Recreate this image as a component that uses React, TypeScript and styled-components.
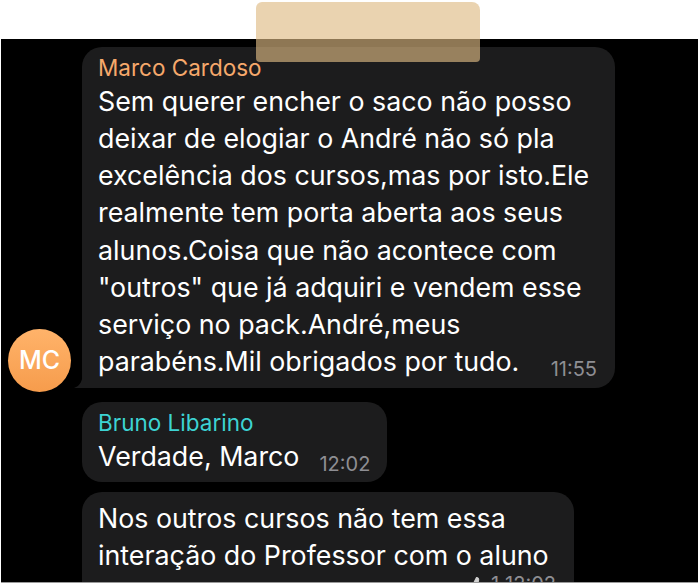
import React from "react";
import styled, { createGlobalStyle } from "styled-components";
import { ThumbsUp } from "lucide-react";

const Global = createGlobalStyle`
  html, body { margin: 0; padding: 0; background: #ffffff; }
  body { width: 700px; height: 585px; overflow: hidden; font-family: Inter, "Liberation Sans", sans-serif; }
`;

const Page = styled.div`
  position: relative;
  width: 700px;
  height: 585px;
  display: flex;
  flex-direction: column;
  background: #ffffff;
`;

const TopStrip = styled.div`
  height: 39px;
  flex: none;
`;

const Chat = styled.div`
  height: 544px;
  margin: 0 2px 0 1px;
  background: #000000;
  overflow: hidden;
  border-bottom: 1px solid #9a9a9a;
  box-sizing: border-box;
  padding: 8px 0 0 0;
  display: flex;
  flex-direction: column;
  gap: 14px;
`;

const Group = styled.div`
  display: flex;
  align-items: flex-end;
`;

const AvatarCol = styled.div`
  width: 81px;
  flex: none;
  display: flex;
  justify-content: flex-start;
  padding-left: 7px;
  box-sizing: border-box;
`;

const Avatar = styled.div`
  width: 63px;
  height: 63px;
  border-radius: 50%;
  background: linear-gradient(180deg, #ffb36a 0%, #f69c4c 100%);
  color: #ffffff;
  font-family: Inter, "Liberation Sans", sans-serif;
  font-weight: 500;
  font-size: 25px;
  display: flex;
  align-items: center;
  justify-content: center;
  margin-bottom: -4px;
`;

const Stack = styled.div`
  display: flex;
  flex-direction: column;
  gap: 10px;
`;

const Bubble = styled.div<{ $w: number; $tail?: boolean; $pb?: number }>`
  position: relative;
  width: ${(p) => p.$w}px;
  box-sizing: border-box;
  background: #1c1c1d;
  border-radius: 20px;
  border-bottom-left-radius: ${(p) => (p.$tail ? "6px" : "20px")};
  padding: 8px 18px ${(p) => p.$pb ?? 7}px 16px;
  color: #ffffff;
`;

const Tail = styled.svg`
  position: absolute;
  left: -8px;
  bottom: 0;
`;

const Name = styled.div<{ $color: string }>`
  color: ${(p) => p.$color};
  font-size: 22.5px;
  line-height: 26px;
  font-weight: 400;
  margin-bottom: 2px;
`;

const Line = styled.div`
  font-size: 26.8px;
  line-height: 37.15px;
  height: 37.15px;
  white-space: nowrap;
`;

const LastLine = styled.div`
  display: flex;
  align-items: baseline;
  justify-content: space-between;
  font-size: 26.8px;
  line-height: 37px;
  height: 37px;
  white-space: nowrap;
`;

const Time = styled.span`
  color: #8e8e93;
  font-size: 20px;
  line-height: 20px;
  margin-left: 20px;
  position: relative;
  top: 5px;
`;

const Meta = styled.div`
  display: flex;
  justify-content: flex-end;
  align-items: center;
  gap: 6px;
  color: #8e8e93;
  font-size: 20px;
  height: 26px;
  margin-top: -3px;
`;

const Tape = styled.div`
  position: absolute;
  left: 256px;
  top: 2px;
  width: 224px;
  height: 60px;
  border-radius: 6px 8px 4px 4px;
  background: rgba(222, 186, 132, 0.64);
  pointer-events: none;
`;

const marcoLines = [
  "Sem querer encher o saco não posso",
  "deixar de elogiar o André não só pla",
  "excelência dos cursos,mas por isto.Ele",
  "realmente tem porta aberta aos seus",
  "alunos.Coisa que não acontece com",
  "\"outros\" que já adquiri e vendem esse",
  "serviço no pack.André,meus",
];

export default function App() {
  return (
    <>
      <Global />
      <Page>
        <TopStrip />
        <Chat>
          <Group>
            <AvatarCol>
              <Avatar>MC</Avatar>
            </AvatarCol>
            <Bubble $w={533} $tail $pb={8}>
              <Tail width="14" height="18" viewBox="0 0 14 18">
                <path d="M14 0 L14 18 L0 18 C6 16 9 11 9 0 Z" fill="#1c1c1d" />
              </Tail>
              <Name $color="#f6a86b">Marco Cardoso</Name>
              {marcoLines.map((l) => (
                <Line key={l}>{l}</Line>
              ))}
              <LastLine>
                <span>parabéns.Mil obrigados por tudo.</span>
                <Time>11:55</Time>
              </LastLine>
            </Bubble>
          </Group>
          <Group>
            <AvatarCol />
            <Stack>
              <Bubble $w={305} $pb={7}>
                <Name $color="#3dd3d3">Bruno Libarino</Name>
                <LastLine>
                  <span>Verdade, Marco</span>
                  <Time>12:02</Time>
                </LastLine>
              </Bubble>
              <Bubble $w={492}>
                <Line>Nos outros cursos não tem essa</Line>
                <Line>interação do Professor com o aluno</Line>
                <Meta>
                  <ThumbsUp size={17} color="#d0d0d0" fill="#d0d0d0" strokeWidth={1.5} />
                  <span>1</span>
                  <span>12:02</span>
                </Meta>
              </Bubble>
            </Stack>
          </Group>
        </Chat>
        <Tape />
      </Page>
    </>
  );
}
